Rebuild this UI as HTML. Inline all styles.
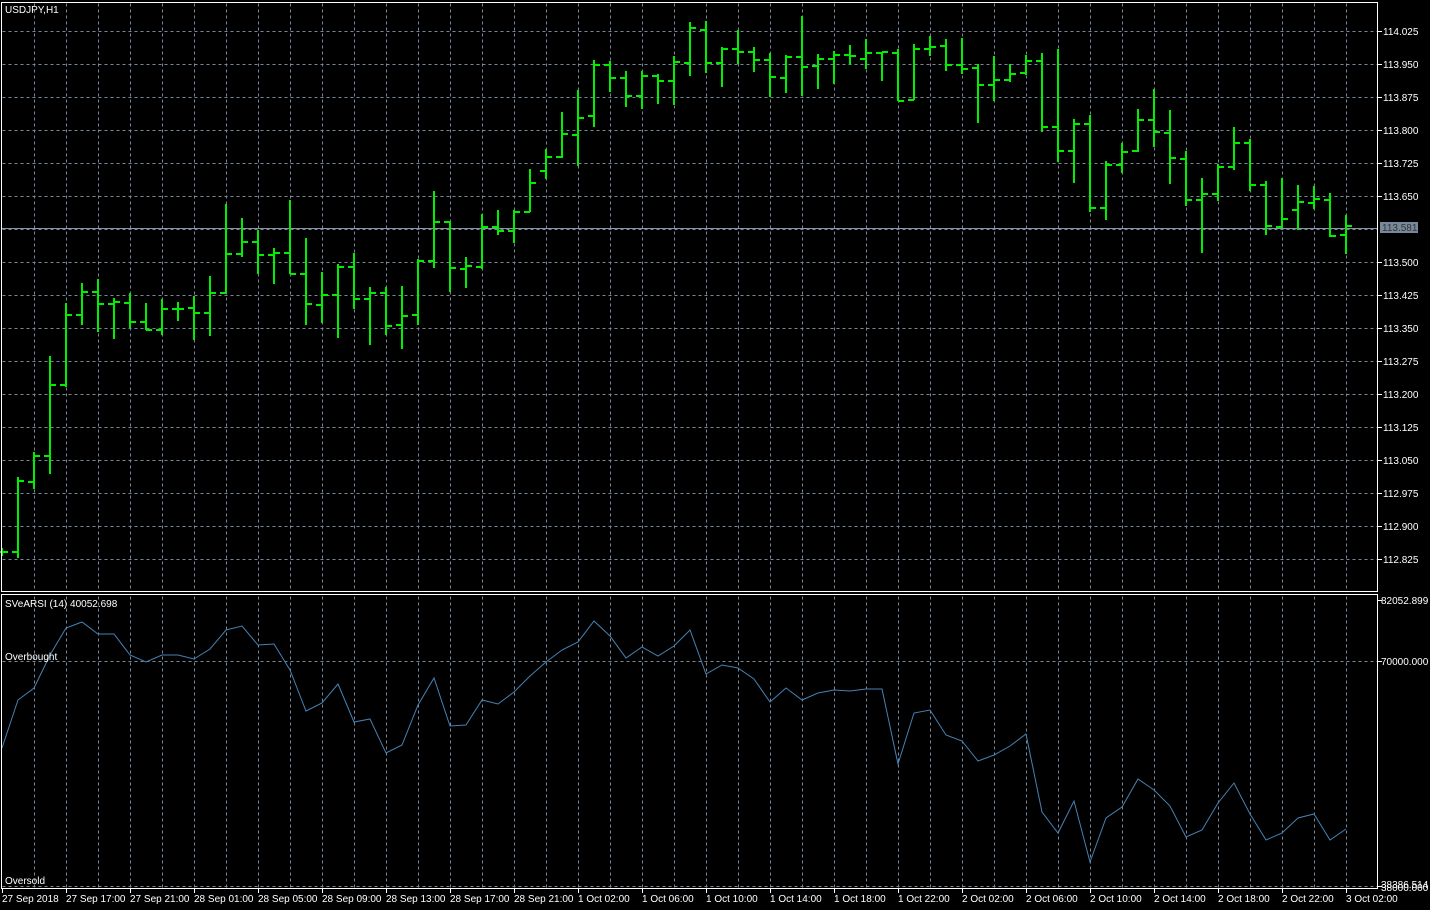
<!DOCTYPE html>
<html><head><meta charset="utf-8"><style>
html,body{margin:0;padding:0;background:#000;width:1430px;height:910px;overflow:hidden}
svg{display:block}
text{font-family:"Liberation Sans",sans-serif;font-size:10px;fill:#fff}
</style></head><body>
<svg width="1430" height="910" viewBox="0 0 1430 910" xmlns="http://www.w3.org/2000/svg">
<rect width="1430" height="910" fill="#000"/>
<g transform="translate(0.5,0.5)" stroke="#77889a" stroke-width="1" stroke-dasharray="3,3" fill="none">
<path d="M34 3V591M66 3V591M98 3V591M130 3V591M162 3V591M194 3V591M226 3V591M258 3V591M290 3V591M322 3V591M354 3V591M386 3V591M418 3V591M450 3V591M482 3V591M514 3V591M546 3V591M578 3V591M610 3V591M642 3V591M674 3V591M706 3V591M738 3V591M770 3V591M802 3V591M834 3V591M866 3V591M898 3V591M930 3V591M962 3V591M994 3V591M1026 3V591M1058 3V591M1090 3V591M1122 3V591M1154 3V591M1186 3V591M1218 3V591M1250 3V591M1282 3V591M1314 3V591M1346 3V591"/>
<path d="M34 596V888M66 596V888M98 596V888M130 596V888M162 596V888M194 596V888M226 596V888M258 596V888M290 596V888M322 596V888M354 596V888M386 596V888M418 596V888M450 596V888M482 596V888M514 596V888M546 596V888M578 596V888M610 596V888M642 596V888M674 596V888M706 596V888M738 596V888M770 596V888M802 596V888M834 596V888M866 596V888M898 596V888M930 596V888M962 596V888M994 596V888M1026 596V888M1058 596V888M1090 596V888M1122 596V888M1154 596V888M1186 596V888M1218 596V888M1250 596V888M1282 596V888M1314 596V888M1346 596V888"/>
<path d="M2 31H1377M2 64H1377M2 97H1377M2 130H1377M2 163H1377M2 196H1377M2 229H1377M2 262H1377M2 295H1377M2 328H1377M2 361H1377M2 394H1377M2 427H1377M2 460H1377M2 493H1377M2 526H1377M2 559H1377M2 661H1377M2 886H1377"/>
</g>
<line x1="2" y1="228.5" x2="1378" y2="228.5" stroke="#8a96a4" stroke-width="1"/>
<path fill="none" stroke="#00ee00" stroke-width="2" d="
M2 548V556M-4 552H2M2 552H8
M18 477V558M12 552H18M18 481H24
M34 452V489M28 482H34M34 456H40
M50 356V474M44 456H50M50 385H56
M66 303V387M60 385H66M66 315H72
M82 283V325M76 315H82M82 292H88
M98 279V332M92 292H98M98 304H104
M114 298V339M108 304H114M114 302H120
M130 293V328M124 303H130M130 322H136
M146 303V330M140 322H146M146 330H152
M162 299V335M156 330H162M162 309H168
M178 302V321M172 309H178M178 309H184
M194 296V340M188 308H194M194 313H200
M210 276V336M204 313H210M210 293H216
M226 204V293M220 293H226M226 254H232
M242 218V257M236 254H242M242 242H248
M258 230V274M252 242H258M258 255H264
M274 248V284M268 255H274M274 253H280
M290 200V274M284 253H290M290 274H296
M306 238V325M300 274H306M306 304H312
M322 272V323M316 305H322M322 295H328
M338 264V338M332 295H338M338 267H344
M354 253V309M348 267H354M354 299H360
M370 287V345M364 299H370M370 293H376
M386 287V335M380 293H386M386 326H392
M402 286V349M396 325H402M402 316H408
M418 259V325M412 315H418M418 261H424
M434 191V268M428 261H434M434 222H440
M450 221V292M444 222H450M450 268H456
M466 257V288M460 269H466M466 266H472
M482 214V269M476 267H482M482 227H488
M498 210V235M492 227H498M498 231H504
M514 210V243M508 231H514M514 212H520
M530 169V212M524 212H530M530 183H536
M546 149V179M540 171H546M546 157H552
M562 112V158M556 157H562M562 134H568
M578 90V166M572 135H578M578 118H584
M594 60V127M588 116H594M594 65H600
M610 61V92M604 65H610M610 78H616
M626 71V107M620 78H626M626 96H632
M642 71V109M636 96H642M642 76H648
M658 74V104M652 76H658M658 81H664
M674 56V105M668 81H674M674 62H680
M690 22V76M684 63H690M690 28H696
M706 21V73M700 30H706M706 63H712
M722 47V87M716 63H722M722 49H728
M738 30V64M732 49H738M738 52H744
M754 47V72M748 52H754M754 60H760
M770 53V97M764 60H770M770 77H776
M786 55V93M780 78H786M786 57H792
M802 16V96M796 57H802M802 67H808
M818 54V89M812 66H818M818 59H824
M834 51V84M828 59H834M834 55H840
M850 45V65M844 55H850M850 56H856
M866 39V69M860 59H866M866 53H872
M882 52V81M876 53H882M882 52H888
M898 49V101M892 53H898M898 101H904
M914 44V100M908 100H914M914 49H920
M930 36V56M924 49H930M930 47H936
M946 39V71M940 46H946M946 65H952
M962 38V74M956 65H962M962 69H968
M978 64V123M972 68H978M978 85H984
M994 56V101M988 85H994M994 80H1000
M1010 64V82M1004 80H1010M1010 74H1016
M1026 55V75M1020 73H1026M1026 61H1032
M1042 53V132M1036 61H1042M1042 127H1048
M1058 49V162M1052 127H1058M1058 151H1064
M1074 119V183M1068 151H1074M1074 124H1080
M1090 115V212M1084 124H1090M1090 208H1096
M1106 161V220M1100 208H1106M1106 165H1112
M1122 143V173M1116 165H1122M1122 152H1128
M1138 109V152M1132 151H1138M1138 120H1144
M1154 89V147M1148 120H1154M1154 132H1160
M1170 110V184M1164 133H1170M1170 158H1176
M1186 151V206M1180 159H1186M1186 200H1192
M1202 178V253M1196 200H1202M1202 194H1208
M1218 164V201M1212 194H1218M1218 167H1224
M1234 127V170M1228 167H1234M1234 143H1240
M1250 139V191M1244 143H1250M1250 185H1256
M1266 181V235M1260 185H1266M1266 226H1272
M1282 178V228M1276 227H1282M1282 219H1288
M1298 185V230M1292 210H1298M1298 202H1304
M1314 186V209M1308 203H1314M1314 199H1320
M1330 193V237M1324 200H1330M1330 236H1336
M1346 215V254M1340 235H1346M1346 226H1352"/>
<polyline fill="none" stroke="#4682b4" stroke-width="1" points="2,748 18,700 34,688 50,655 66,628 82,622 98,634 114,634 130,655 146,662 162,655 178,655 194,659 210,649 226,630 242,626 258,645 274,644 290,670 306,711 322,703 338,684 354,722 370,719 386,753 402,745 418,705 434,678 450,726 466,725 482,700 498,704 514,692 530,676 546,662 562,650 578,642 594,621 610,636 626,658 642,647 658,656 674,646 690,630 706,674 722,665 738,668 754,679 770,702 786,688 802,700 818,693 834,690 850,691 866,689 882,689 898,764 914,713 930,710 946,735 962,741 978,761 994,755 1010,746 1026,734 1042,812 1058,833 1074,801 1090,862 1106,818 1122,807 1138,779 1154,790 1170,806 1186,837 1202,830 1218,803 1234,783 1250,814 1266,840 1282,833 1298,818 1314,814 1330,840 1346,829"/>
<g stroke="#fff" stroke-width="1" fill="none">
<rect x="1.5" y="2.5" width="1376" height="589"/>
<rect x="1.5" y="594.5" width="1376" height="294"/>
<path d="M1378 31.5H1382M1378 64.5H1382M1378 97.5H1382M1378 130.5H1382M1378 163.5H1382M1378 196.5H1382M1378 262.5H1382M1378 295.5H1382M1378 328.5H1382M1378 361.5H1382M1378 394.5H1382M1378 427.5H1382M1378 460.5H1382M1378 493.5H1382M1378 526.5H1382M1378 559.5H1382M1378 600.5H1382M1378 661.5H1382M1378 886.5H1382"/>
<path d="M2.5 889V893M66.5 889V893M130.5 889V893M194.5 889V893M258.5 889V893M322.5 889V893M386.5 889V893M450.5 889V893M514.5 889V893M578.5 889V893M642.5 889V893M706.5 889V893M770.5 889V893M834.5 889V893M898.5 889V893M962.5 889V893M1026.5 889V893M1090.5 889V893M1154.5 889V893M1218.5 889V893M1282.5 889V893M1346.5 889V893"/>
</g>
<g>
<text x="1383" y="35">114.025</text>
<text x="1383" y="68">113.950</text>
<text x="1383" y="101">113.875</text>
<text x="1383" y="134">113.800</text>
<text x="1383" y="167">113.725</text>
<text x="1383" y="200">113.650</text>
<text x="1383" y="266">113.500</text>
<text x="1383" y="299">113.425</text>
<text x="1383" y="332">113.350</text>
<text x="1383" y="365">113.275</text>
<text x="1383" y="398">113.200</text>
<text x="1383" y="431">113.125</text>
<text x="1383" y="464">113.050</text>
<text x="1383" y="497">112.975</text>
<text x="1383" y="530">112.900</text>
<text x="1383" y="563">112.825</text>
<rect x="1380" y="222" width="38" height="11" fill="#77889a"/>
<text x="1382" y="231" style="fill:#333">113.581</text>
<text x="1381" y="604">82052.899</text>
<text x="1381" y="665">70000.000</text>
<text x="1381" y="888">38386.514</text>
<text x="1381" y="891">38000.000</text>
</g>
<g>
<text x="5" y="13">USDJPY,H1</text>
<text x="5" y="607">SVeARSI (14) 40052.698</text>
<text x="5" y="660">Overbought</text>
<text x="5" y="884">Oversold</text>
</g>
<g>
<text x="2" y="902">27 Sep 2018</text>
<text x="66" y="902">27 Sep 17:00</text>
<text x="130" y="902">27 Sep 21:00</text>
<text x="194" y="902">28 Sep 01:00</text>
<text x="258" y="902">28 Sep 05:00</text>
<text x="322" y="902">28 Sep 09:00</text>
<text x="386" y="902">28 Sep 13:00</text>
<text x="450" y="902">28 Sep 17:00</text>
<text x="514" y="902">28 Sep 21:00</text>
<text x="578" y="902">1 Oct 02:00</text>
<text x="642" y="902">1 Oct 06:00</text>
<text x="706" y="902">1 Oct 10:00</text>
<text x="770" y="902">1 Oct 14:00</text>
<text x="834" y="902">1 Oct 18:00</text>
<text x="898" y="902">1 Oct 22:00</text>
<text x="962" y="902">2 Oct 02:00</text>
<text x="1026" y="902">2 Oct 06:00</text>
<text x="1090" y="902">2 Oct 10:00</text>
<text x="1154" y="902">2 Oct 14:00</text>
<text x="1218" y="902">2 Oct 18:00</text>
<text x="1282" y="902">2 Oct 22:00</text>
<text x="1346" y="902">3 Oct 02:00</text>
</g>
</svg>
</body></html>
